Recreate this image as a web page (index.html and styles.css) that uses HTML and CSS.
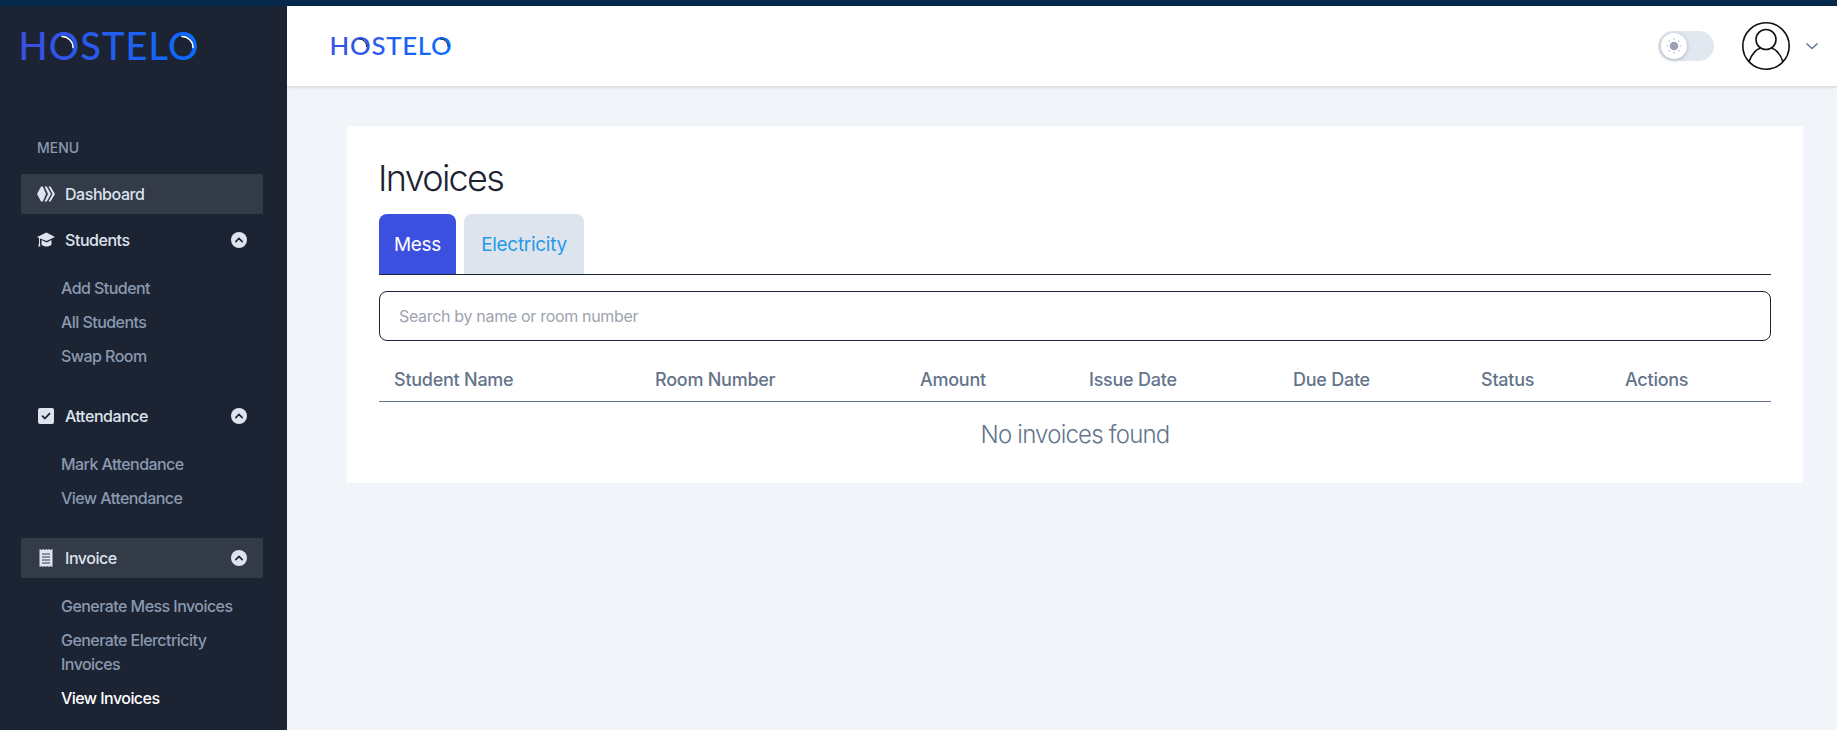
FILE: index.html
```html
<!DOCTYPE html>
<html lang="en">
<head>
    <meta charset="UTF-8">
    <meta name="viewport" content="width=device-width, initial-scale=1.0">
    <title>Invoices</title>
    <link rel="stylesheet" href="styles.css">
</head>
<body>
    <svg class="defs" width="0" height="0">
        <defs>
            <linearGradient id="logoGrad" x1="0" x2="1" y1="0" y2="0">
                <stop offset="0" stop-color="#3b4fe0"/>
                <stop offset="1" stop-color="#0a6cff"/>
            </linearGradient>
            <symbol id="chevUp" viewBox="0 0 16 16">
                <circle cx="8" cy="8" r="8" fill="#dee4ee"/>
                <path d="M4.800 9.600 8 6.400l3.200 3.200" fill="none" stroke="#1c2434" stroke-width="1.600" stroke-linecap="round" stroke-linejoin="round"/>
            </symbol>
        </defs>
    </svg>
    <div class="top-strip"></div>
    <div class="app">
        <aside class="sidebar">
            <svg class="logo logo-big" viewBox="0 0 176 28">
                <text x="-2.500" y="27.500" textLength="180" font-size="38" fill="url(#logoGrad)">HOSTELO</text>
                <path d="M41 4.500a11 11 0 0 1 11 11" fill="none" stroke="#fff" stroke-width="1.500" stroke-linecap="round"/>
                <path d="M161 4.500a11 11 0 0 1 11 11" fill="none" stroke="#fff" stroke-width="1.500" stroke-linecap="round"/>
            </svg>

            <h3 class="menu-title">MENU</h3>

            <a class="nav-item active">
                <svg class="nav-icon" viewBox="0 0 18 18" fill="#dee4ee">
                    <path d="M4 1.500h1.800L9 9l-3.200 7.500H4L0 9z"/>
                    <path d="M7.500 1.500h2.200L14 9l-4.300 7.500H7.500L11 9z"/>
                    <path d="M11.500 1.500h2L18 9l-4.500 7.500h-2L15.500 9z"/>
                </svg>
                Dashboard
            </a>

            <a class="nav-item">
                <svg class="nav-icon" viewBox="0 0 18 18" fill="#dee4ee">
                    <path d="M9.500 1.500 0 6l2 .9V12l-.8 3.500h2.100L3 12V7.400L9.500 10 18 6z"/>
                    <path d="M4.500 9v4.500c1.300 1.400 3.200 2 5 2s3.700-.6 5-2V9l-5 2.400z"/>
                </svg>
                Students
                <svg class="nav-chev"><use href="#chevUp"/></svg>
            </a>
            <ul class="sub-list">
                <li>Add Student</li>
                <li>All Students</li>
                <li>Swap Room</li>
            </ul>

            <a class="nav-item">
                <svg class="nav-icon" viewBox="0 0 18 18">
                    <rect x="1" y="1" width="16" height="16" rx="2" fill="#dee4ee"/>
                    <path d="M5.500 9.200 8 11.500l4.500-4.800" fill="none" stroke="#1c2434" stroke-width="1.800" stroke-linecap="round" stroke-linejoin="round"/>
                </svg>
                Attendance
                <svg class="nav-chev"><use href="#chevUp"/></svg>
            </a>
            <ul class="sub-list">
                <li>Mark Attendance</li>
                <li>View Attendance</li>
            </ul>

            <a class="nav-item active">
                <svg class="nav-icon" viewBox="0 0 18 18">
                    <path d="M3 0l1.500 1L6 0l1.500 1L9 0l1.500 1L12 0l1.500 1L15 0l.5.5v17l-.5.5-1.500-1-1.500 1-1.500-1L9 18l-1.500-1L6 18l-1.500-1L3 18l-.5-.5V.5z" fill="#dee4ee"/>
                    <path d="M5 5h8M5 8h8M5 11h8M5 14h8" stroke="#333a48" stroke-width="1.200"/>
                </svg>
                Invoice
                <svg class="nav-chev"><use href="#chevUp"/></svg>
            </a>
            <ul class="sub-list">
                <li>Generate Mess Invoices</li>
                <li>Generate Elerctricity Invoices</li>
                <li class="current">View Invoices</li>
            </ul>
        </aside>

        <div class="content">
            <header class="topbar">
                <svg class="logo logo-small" viewBox="0 0 176 28">
                    <text x="-2.500" y="27.500" textLength="180" font-size="38" fill="url(#logoGrad)">HOSTELO</text>
                    <path d="M41 4.500a11 11 0 0 1 11 11" fill="none" stroke="#1c2434" stroke-width="1.500" stroke-linecap="round"/>
                    <path d="M161 4.500a11 11 0 0 1 11 11" fill="none" stroke="#1c2434" stroke-width="1.500" stroke-linecap="round"/>
                </svg>
                <div class="topbar-right">
                    <div class="toggle">
                        <span class="knob">
                            <svg viewBox="0 0 14 14" width="16" height="16">
                                <circle cx="7" cy="7" r="3.800" fill="#98a2b3"/>
                                <path d="M7 .5v1M7 12.500v1M.5 7h1M12.500 7h1M2.400 2.400l.7.7M10.900 10.900l.7.7M2.400 11.600l.7-.7M10.900 3.100l.7-.7" stroke="#98a2b3" stroke-width="1"/>
                            </svg>
                        </span>
                    </div>
                    <svg class="avatar" viewBox="0 0 48 48" fill="none" stroke="#111" stroke-width="1.600">
                        <circle cx="24" cy="24" r="23.200"/>
                        <circle cx="24" cy="17.500" r="10"/>
                        <path d="M7 40c2.500-9 9-13.500 11-13.500M41 40c-2.500-9-9-13.500-11-13.500"/>
                    </svg>
                    <svg class="caret" viewBox="0 0 14 8" fill="none" stroke="#64748b" stroke-width="1.500">
                        <path d="M1.500 1.500 7 6.500l5.500-5"/>
                    </svg>
                </div>
            </header>

            <main class="main">
                <div class="card">
                    <h1>Invoices</h1>
                    <div class="tabs">
                        <button class="tab tab-active">Mess</button>
                        <button class="tab">Electricity</button>
                    </div>
                    <input class="search" type="text" placeholder="Search by name or room number">
                    <div class="table-head">
                        <span>Student Name</span>
                        <span>Room Number</span>
                        <span>Amount</span>
                        <span>Issue Date</span>
                        <span>Due Date</span>
                        <span>Status</span>
                        <span>Actions</span>
                    </div>
                    <p class="empty">No invoices found</p>
                </div>
            </main>
        </div>
    </div>
</body>
</html>
```

FILE: styles.css
```css
* {
    box-sizing: border-box;
}
html, body {
    height: 100%;
}
body {
    margin: 0;
    font-family: Inter, "Liberation Sans", sans-serif;
    background: #f1f5f9;
    overflow: hidden;
    display: flex;
    flex-direction: column;
}
.defs {
    position: absolute;
}
.top-strip {
    height: 6px;
    background: #04294a;
    flex-shrink: 0;
}
.app {
    display: flex;
    flex: 1;
    min-height: 0;
    background: #04294a;
}

/* sidebar */
.sidebar {
    width: 287px;
    flex-shrink: 0;
    background: #1c2434;
    border-top-left-radius: 4px;
    padding: 26px 24px 0 21px;
    overflow: hidden;
}
.logo {
    display: block;
    overflow: visible;
}
.logo text {
    font-family: Lato, sans-serif;
    font-weight: 500;
}
.logo-big {
    width: 176px;
    height: 28px;
}
.logo-small {
    width: 120px;
    height: 19px;
    margin-bottom: 2px;
}
.menu-title {
    margin: 78px 0 16px 16px;
    font-size: 14px;
    line-height: 20px;
    font-weight: 500;
    color: #8a99af;
}
.nav-item {
    display: flex;
    align-items: center;
    height: 40px;
    padding: 0 16px;
    margin-bottom: 6px;
    border-radius: 2px;
    font-size: 16px;
    font-weight: 500;
    letter-spacing: -0.45px;
    color: #dee4ee;
}
.nav-item.active {
    background: #333a48;
}
.nav-icon {
    width: 18px;
    height: 18px;
    margin-right: 10px;
    flex-shrink: 0;
}
.nav-chev {
    width: 16px;
    height: 16px;
    margin-left: auto;
}
.sub-list {
    list-style: none;
    margin: 16px 0 28px;
    padding: 0 16px 0 40px;
    font-size: 16px;
    line-height: 24px;
    font-weight: 500;
    letter-spacing: -0.55px;
    color: #8a99af;
}
.sub-list li {
    margin-bottom: 10px;
}
.sub-list li:last-child {
    margin-bottom: 0;
}
.sub-list .current {
    color: #fff;
}

/* top bar */
.content {
    flex: 1;
    min-width: 0;
    background: #f1f5f9;
}
.topbar {
    height: 80px;
    background: #fff;
    box-shadow: 0 1px 3px rgba(0, 0, 0, 0.15);
    display: flex;
    align-items: center;
    justify-content: space-between;
    padding: 0 18px 0 44px;
}
.topbar-right {
    display: flex;
    align-items: center;
}
.toggle {
    width: 56px;
    height: 30px;
    border-radius: 15px;
    background: #e2e8f0;
    padding: 2px 3px;
}
.knob {
    width: 26px;
    height: 26px;
    border-radius: 50%;
    background: #fff;
    box-shadow: 0 1px 4px rgba(0, 0, 0, 0.25);
    display: flex;
    align-items: center;
    justify-content: center;
}
.avatar {
    width: 48px;
    height: 48px;
    margin-left: 28px;
}
.caret {
    width: 14px;
    height: 8px;
    margin-left: 15px;
}

/* invoices card */
.main {
    padding: 40px 34px 0 60px;
}
.card {
    background: #fff;
    padding: 32px 32px 0;
    height: 357px;
}
.card h1 {
    margin: 0 0 15px -1px;
    font-size: 36px;
    line-height: 41px;
    font-weight: 300;
    letter-spacing: -1.7px;
    color: #1c2434;
}
.tabs {
    display: flex;
    gap: 8px;
    border-bottom: 1px solid #1c2434;
    height: 61px;
}
.tab {
    border: none;
    border-radius: 8px 8px 0 0;
    height: 60px;
    width: 77px;
    padding: 0;
    font-family: inherit;
    font-size: 19px;
    font-weight: 400;
    letter-spacing: -0.3px;
    background: #dee4ee;
    color: #259ae6;
}
.tab + .tab {
    width: 120px;
}
.tab-active {
    background: #3c50e0;
    color: #fff;
}
.search {
    display: block;
    width: 100%;
    height: 50px;
    margin-top: 16px;
    padding: 0 19px;
    border: 1px solid #1c2434;
    border-radius: 8px;
    font-family: inherit;
    font-size: 16px;
    letter-spacing: -0.32px;
    outline: none;
}
.search::placeholder {
    color: #9ca3af;
}
.table-head {
    display: grid;
    grid-template-columns: 261px 265px 169px 204px 188px 144px 161px;
    height: 61px;
    padding-top: 25px;
    border-bottom: 1px solid #64748b;
    font-size: 18px;
    line-height: 28px;
    font-weight: 500;
    letter-spacing: -0.25px;
    color: #64748b;
}
.table-head span {
    padding-left: 15px;
}
.empty {
    margin: 0;
    padding-top: 17px;
    text-align: center;
    font-size: 24px;
    line-height: 32px;
    font-weight: 300;
    letter-spacing: -0.78px;
    color: #64748b;
}
```
